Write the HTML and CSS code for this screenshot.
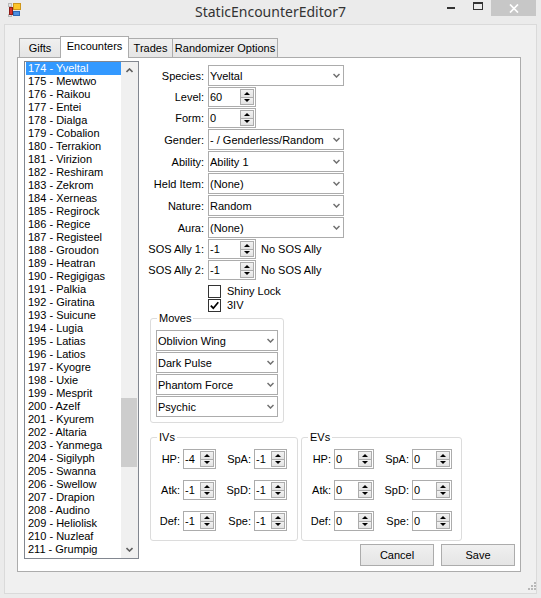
FILE: index.html
```html
<!DOCTYPE html>
<html lang="en">
<head>
    <meta charset="UTF-8">
    <meta name="viewport" content="width=device-width, initial-scale=1.0">
    <title>StaticEncounterEditor7</title>
    <link rel="stylesheet" href="styles.css">
</head>
<body>
    <div class="window">
        <!-- Title bar -->
        <div class="title-bar">
            <div class="title-left">
                <svg class="app-icon" width="14" height="14" viewBox="0 0 14 14">
                    <rect x="0.5" y="0.5" width="3" height="3" fill="#e2e2e2" stroke="#b9b9b9"/>
                    <rect x="0.5" y="11.5" width="3" height="2" fill="#e2e2e2" stroke="#b9b9b9"/>
                    <rect x="1.5" y="4.5" width="3" height="7" fill="#d9342c" stroke="#8e1d18"/>
                    <rect x="5.5" y="0.5" width="7" height="6" fill="#fcc52a" stroke="#cf961b"/>
                    <rect x="5.5" y="8.5" width="6" height="4" fill="#4d8fe0" stroke="#2d68b5"/>
                </svg>
            </div>
            <div class="title-text">StaticEncounterEditor7</div>
            <div class="title-right">
                <span class="caption-min"></span>
                <span class="caption-max"></span>
                <span class="caption-close">
                    <svg width="10" height="9" viewBox="0 0 10 9">
                        <path d="M1 0.5 L9 8.5 M9 0.5 L1 8.5" stroke="#fff" stroke-width="1.7" fill="none"/>
                    </svg>
                </span>
            </div>
        </div>

        <!-- Client area -->
        <div class="client">
            <div class="tab-strip">
                <div class="tab tab-gifts">Gifts</div>
                <div class="tab tab-encounters selected">Encounters</div>
                <div class="tab tab-trades">Trades</div>
                <div class="tab tab-random">Randomizer Options</div>
            </div>

            <div class="tab-page">
                <!-- Encounter list -->
                <div class="list-box">
                    <div class="list-items">
                        <div class="list-item selected">174 - Yveltal</div>
                        <div class="list-item">175 - Mewtwo</div>
                        <div class="list-item">176 - Raikou</div>
                        <div class="list-item">177 - Entei</div>
                        <div class="list-item">178 - Dialga</div>
                        <div class="list-item">179 - Cobalion</div>
                        <div class="list-item">180 - Terrakion</div>
                        <div class="list-item">181 - Virizion</div>
                        <div class="list-item">182 - Reshiram</div>
                        <div class="list-item">183 - Zekrom</div>
                        <div class="list-item">184 - Xerneas</div>
                        <div class="list-item">185 - Regirock</div>
                        <div class="list-item">186 - Regice</div>
                        <div class="list-item">187 - Registeel</div>
                        <div class="list-item">188 - Groudon</div>
                        <div class="list-item">189 - Heatran</div>
                        <div class="list-item">190 - Regigigas</div>
                        <div class="list-item">191 - Palkia</div>
                        <div class="list-item">192 - Giratina</div>
                        <div class="list-item">193 - Suicune</div>
                        <div class="list-item">194 - Lugia</div>
                        <div class="list-item">195 - Latias</div>
                        <div class="list-item">196 - Latios</div>
                        <div class="list-item">197 - Kyogre</div>
                        <div class="list-item">198 - Uxie</div>
                        <div class="list-item">199 - Mesprit</div>
                        <div class="list-item">200 - Azelf</div>
                        <div class="list-item">201 - Kyurem</div>
                        <div class="list-item">202 - Altaria</div>
                        <div class="list-item">203 - Yanmega</div>
                        <div class="list-item">204 - Sigilyph</div>
                        <div class="list-item">205 - Swanna</div>
                        <div class="list-item">206 - Swellow</div>
                        <div class="list-item">207 - Drapion</div>
                        <div class="list-item">208 - Audino</div>
                        <div class="list-item">209 - Heliolisk</div>
                        <div class="list-item">210 - Nuzleaf</div>
                        <div class="list-item">211 - Grumpig</div>
                    </div>
                    <div class="v-scroll">
                        <div class="scroll-arrow">
                            <svg width="7" height="5" viewBox="0 0 7 5"><path d="M0.5 4 L3.5 1 L6.5 4" stroke="#606060" stroke-width="1.6" fill="none"/></svg>
                        </div>
                        <div class="scroll-track">
                            <div class="scroll-thumb"></div>
                        </div>
                        <div class="scroll-arrow">
                            <svg width="7" height="5" viewBox="0 0 7 5"><path d="M0.5 1 L3.5 4 L6.5 1" stroke="#606060" stroke-width="1.6" fill="none"/></svg>
                        </div>
                    </div>
                </div>

                <!-- Encounter details -->
                <div class="editor">
                    <div class="field-grid">
                        <span class="field-label">Species:</span>
                        <div class="combo combo-wide"><span class="combo-text">Yveltal</span><svg class="chevron" width="7" height="5" viewBox="0 0 7 5"><path d="M0.5 1 L3.5 4 L6.5 1" stroke="#707070" stroke-width="1.5" fill="none"/></svg></div>

                        <span class="field-label">Level:</span>
                        <div class="spinner spinner-field"><span class="spin-value">60</span><span class="spin-buttons"><span class="spin-up"><i></i></span><span class="spin-down"><i></i></span></span></div>

                        <span class="field-label">Form:</span>
                        <div class="spinner spinner-field"><span class="spin-value">0</span><span class="spin-buttons"><span class="spin-up"><i></i></span><span class="spin-down"><i></i></span></span></div>

                        <span class="field-label">Gender:</span>
                        <div class="combo combo-wide"><span class="combo-text">- / Genderless/Random</span><svg class="chevron" width="7" height="5" viewBox="0 0 7 5"><path d="M0.5 1 L3.5 4 L6.5 1" stroke="#707070" stroke-width="1.5" fill="none"/></svg></div>

                        <span class="field-label">Ability:</span>
                        <div class="combo combo-wide"><span class="combo-text">Ability 1</span><svg class="chevron" width="7" height="5" viewBox="0 0 7 5"><path d="M0.5 1 L3.5 4 L6.5 1" stroke="#707070" stroke-width="1.5" fill="none"/></svg></div>

                        <span class="field-label">Held Item:</span>
                        <div class="combo combo-wide"><span class="combo-text">(None)</span><svg class="chevron" width="7" height="5" viewBox="0 0 7 5"><path d="M0.5 1 L3.5 4 L6.5 1" stroke="#707070" stroke-width="1.5" fill="none"/></svg></div>

                        <span class="field-label">Nature:</span>
                        <div class="combo combo-wide"><span class="combo-text">Random</span><svg class="chevron" width="7" height="5" viewBox="0 0 7 5"><path d="M0.5 1 L3.5 4 L6.5 1" stroke="#707070" stroke-width="1.5" fill="none"/></svg></div>

                        <span class="field-label">Aura:</span>
                        <div class="combo combo-wide"><span class="combo-text">(None)</span><svg class="chevron" width="7" height="5" viewBox="0 0 7 5"><path d="M0.5 1 L3.5 4 L6.5 1" stroke="#707070" stroke-width="1.5" fill="none"/></svg></div>

                        <span class="field-label">SOS Ally 1:</span>
                        <div class="sos-row">
                            <div class="spinner spinner-field"><span class="spin-value">-1</span><span class="spin-buttons"><span class="spin-up"><i></i></span><span class="spin-down"><i></i></span></span></div>
                            <span>No SOS Ally</span>
                        </div>

                        <span class="field-label">SOS Ally 2:</span>
                        <div class="sos-row">
                            <div class="spinner spinner-field"><span class="spin-value">-1</span><span class="spin-buttons"><span class="spin-up"><i></i></span><span class="spin-down"><i></i></span></span></div>
                            <span>No SOS Ally</span>
                        </div>
                    </div>

                    <div class="check-list">
                        <div class="check-row">
                            <span class="check-box"></span>
                            <span class="check-text">Shiny Lock</span>
                        </div>
                        <div class="check-row">
                            <span class="check-box">
                                <svg width="11" height="11" viewBox="0 0 11 11"><path d="M1.8 5.6 L4.3 8.2 L9.3 2.2" stroke="#000" stroke-width="1.7" fill="none"/></svg>
                            </span>
                            <span class="check-text">3IV</span>
                        </div>
                    </div>

                    <!-- Moves -->
                    <fieldset class="group-box moves-box">
                        <legend>Moves</legend>
                        <div class="move-list">
                            <div class="combo combo-move"><span class="combo-text">Oblivion Wing</span><svg class="chevron" width="7" height="5" viewBox="0 0 7 5"><path d="M0.5 1 L3.5 4 L6.5 1" stroke="#707070" stroke-width="1.5" fill="none"/></svg></div>
                            <div class="combo combo-move"><span class="combo-text">Dark Pulse</span><svg class="chevron" width="7" height="5" viewBox="0 0 7 5"><path d="M0.5 1 L3.5 4 L6.5 1" stroke="#707070" stroke-width="1.5" fill="none"/></svg></div>
                            <div class="combo combo-move"><span class="combo-text">Phantom Force</span><svg class="chevron" width="7" height="5" viewBox="0 0 7 5"><path d="M0.5 1 L3.5 4 L6.5 1" stroke="#707070" stroke-width="1.5" fill="none"/></svg></div>
                            <div class="combo combo-move"><span class="combo-text">Psychic</span><svg class="chevron" width="7" height="5" viewBox="0 0 7 5"><path d="M0.5 1 L3.5 4 L6.5 1" stroke="#707070" stroke-width="1.5" fill="none"/></svg></div>
                        </div>
                    </fieldset>

                    <!-- IVs / EVs -->
                    <div class="stats-row">
                        <fieldset class="group-box">
                            <legend>IVs</legend>
                            <div class="stat-grid iv-grid">
                                <span class="stat-label">HP:</span>
                                <div class="spinner"><span class="spin-value">-4</span><span class="spin-buttons"><span class="spin-up"><i></i></span><span class="spin-down"><i></i></span></span></div>
                                <span class="stat-label">SpA:</span>
                                <div class="spinner"><span class="spin-value">-1</span><span class="spin-buttons"><span class="spin-up"><i></i></span><span class="spin-down"><i></i></span></span></div>

                                <span class="stat-label">Atk:</span>
                                <div class="spinner"><span class="spin-value">-1</span><span class="spin-buttons"><span class="spin-up"><i></i></span><span class="spin-down"><i></i></span></span></div>
                                <span class="stat-label">SpD:</span>
                                <div class="spinner"><span class="spin-value">-1</span><span class="spin-buttons"><span class="spin-up"><i></i></span><span class="spin-down"><i></i></span></span></div>

                                <span class="stat-label">Def:</span>
                                <div class="spinner"><span class="spin-value">-1</span><span class="spin-buttons"><span class="spin-up"><i></i></span><span class="spin-down"><i></i></span></span></div>
                                <span class="stat-label">Spe:</span>
                                <div class="spinner"><span class="spin-value">-1</span><span class="spin-buttons"><span class="spin-up"><i></i></span><span class="spin-down"><i></i></span></span></div>
                            </div>
                        </fieldset>

                        <fieldset class="group-box">
                            <legend>EVs</legend>
                            <div class="stat-grid ev-grid">
                                <span class="stat-label">HP:</span>
                                <div class="spinner"><span class="spin-value">0</span><span class="spin-buttons"><span class="spin-up"><i></i></span><span class="spin-down"><i></i></span></span></div>
                                <span class="stat-label">SpA:</span>
                                <div class="spinner"><span class="spin-value">0</span><span class="spin-buttons"><span class="spin-up"><i></i></span><span class="spin-down"><i></i></span></span></div>

                                <span class="stat-label">Atk:</span>
                                <div class="spinner"><span class="spin-value">0</span><span class="spin-buttons"><span class="spin-up"><i></i></span><span class="spin-down"><i></i></span></span></div>
                                <span class="stat-label">SpD:</span>
                                <div class="spinner"><span class="spin-value">0</span><span class="spin-buttons"><span class="spin-up"><i></i></span><span class="spin-down"><i></i></span></span></div>

                                <span class="stat-label">Def:</span>
                                <div class="spinner"><span class="spin-value">0</span><span class="spin-buttons"><span class="spin-up"><i></i></span><span class="spin-down"><i></i></span></span></div>
                                <span class="stat-label">Spe:</span>
                                <div class="spinner"><span class="spin-value">0</span><span class="spin-buttons"><span class="spin-up"><i></i></span><span class="spin-down"><i></i></span></span></div>
                            </div>
                        </fieldset>
                    </div>

                    <div class="actions">
                        <button class="win-button">Cancel</button>
                        <button class="win-button">Save</button>
                    </div>
                </div>
            </div>

            <!-- Resize grip -->
            <svg class="size-grip" width="10" height="10" viewBox="0 0 10 10">
                <rect x="8" y="0" width="2" height="2" fill="#b8b8b8"/>
                <rect x="5" y="3" width="2" height="2" fill="#b8b8b8"/>
                <rect x="8" y="3" width="2" height="2" fill="#b8b8b8"/>
                <rect x="2" y="6" width="2" height="2" fill="#b8b8b8"/>
                <rect x="5" y="6" width="2" height="2" fill="#b8b8b8"/>
                <rect x="8" y="6" width="2" height="2" fill="#b8b8b8"/>
            </svg>
        </div>
    </div>
</body>
</html>
```

FILE: styles.css
```css
/* Page */
body {
    margin: 0;
    font-family: "Liberation Sans", Arial, sans-serif;
    font-size: 11px;
    color: #000;
    background: #ebebeb;
}

/* Window frame */
.window {
    width: 541px;
    height: 598px;
    display: flex;
    flex-direction: column;
    overflow: hidden;
}

/* Title bar */
.title-bar {
    height: 24px;
    flex-shrink: 0;
    display: grid;
    grid-template-columns: 1fr auto 1fr;
}

.title-left {
    display: flex;
    align-items: flex-start;
    padding: 3px 0 0 8px;
}

.title-text {
    font-family: "Noto Sans", sans-serif;
    font-size: 14px;
    line-height: 24px;
    color: #333;
}

.title-right {
    display: flex;
    justify-content: flex-end;
    align-items: flex-start;
}

.caption-min {
    width: 8px;
    height: 2px;
    background: #333;
    margin: 7px 18px 0 0;
}

.caption-max {
    width: 10px;
    height: 8px;
    box-sizing: border-box;
    border: 1px solid #333;
    border-top-width: 2px;
    margin: 2px 8px 0 0;
}

.caption-close {
    width: 45px;
    height: 16px;
    margin-right: 5px;
    background: #c7c7c7;
    display: flex;
    align-items: center;
    justify-content: center;
}

/* Client area */
.client {
    flex: 1;
    margin: 0 4px 4px 4px;
    border: 1px solid #dadada;
    background: #f0f0f0;
    display: flex;
    flex-direction: column;
    padding: 11px 0 0 12px;
}

/* Tabs */
.tab-strip {
    display: flex;
    align-items: flex-end;
    height: 22px;
    margin: 0 0 -1px 2px;
    position: relative;
    z-index: 1;
}

.tab {
    height: 19px;
    margin: 0 0 1px -1px;
    box-sizing: border-box;
    border: 1px solid #acacac;
    border-bottom: none;
    background: linear-gradient(#f0f0f0, #e5e5e5);
    display: flex;
    align-items: center;
    justify-content: center;
    white-space: nowrap;
}

.tab-gifts { width: 42px; margin-left: 0; }
.tab-encounters { width: 69px; }
.tab-trades { width: 45px; }
.tab-random { width: 106px; }

.tab.selected {
    height: 22px;
    margin-bottom: 0;
    padding-bottom: 3px;
    background: #fff;
    position: relative;
}

/* Tab page */
.tab-page {
    width: 504px;
    height: 515px;
    box-sizing: border-box;
    border: 1px solid #acacac;
    background: #fff;
    display: flex;
    align-items: flex-start;
    padding: 3px 0 0 6px;
}

/* List box */
.list-box {
    width: 115px;
    height: 498px;
    box-sizing: border-box;
    border: 1px solid #828790;
    padding-left: 1px;
    display: flex;
    flex-shrink: 0;
}

.list-items {
    flex: 1;
    overflow: hidden;
}

.list-item {
    height: 13px;
    line-height: 13px;
    padding-left: 2px;
    white-space: nowrap;
}

.list-item.selected {
    background: #3399ff;
    color: #fff;
}

.v-scroll {
    width: 17px;
    display: flex;
    flex-direction: column;
    background: #f0f0f0;
}

.scroll-arrow {
    height: 17px;
    display: flex;
    align-items: center;
    justify-content: center;
}

.scroll-track {
    flex: 1;
}

.scroll-thumb {
    height: 69px;
    margin: 319px 1px 0 0;
    background: #cdcdcd;
}

/* Editor column */
.editor {
    flex: 1;
    margin: 4px 0 0 11px;
    display: flex;
    flex-direction: column;
    align-items: flex-start;
}

.field-grid {
    display: grid;
    grid-template-columns: 54px auto;
    column-gap: 4px;
    row-gap: 1px;
    align-items: center;
}

.field-label {
    display: flex;
    justify-content: flex-end;
    white-space: nowrap;
}

/* Combo boxes */
.combo {
    height: 21px;
    box-sizing: border-box;
    border: 1px solid #acacac;
    background: #fff;
    padding-left: 1px;
    display: flex;
    align-items: center;
}

.combo-text {
    flex: 1;
    white-space: nowrap;
    overflow: hidden;
}

.chevron {
    margin: 0 3px 0 2px;
}

.combo-wide { width: 136px; }
.combo-move { width: 122px; }

/* Numeric up-down */
.spinner {
    height: 20px;
    box-sizing: border-box;
    border: 1px solid #acacac;
    background: #fff;
    padding-left: 1px;
    display: flex;
}

.spinner-field { width: 48px; }

.spin-value {
    flex: 1;
    line-height: 18px;
}

.spin-buttons {
    width: 14px;
    margin: 1px 1px 1px 0;
    display: flex;
    flex-direction: column;
}

.spin-up,
.spin-down {
    flex: 1;
    box-sizing: border-box;
    border: 1px solid #acacac;
    background: linear-gradient(#f2f2f2, #e3e3e3);
    display: flex;
    align-items: center;
    justify-content: center;
}

.spin-down {
    border-top: none;
}

.spin-up i {
    border-left: 3px solid transparent;
    border-right: 3px solid transparent;
    border-bottom: 3px solid #000;
}

.spin-down i {
    border-left: 3px solid transparent;
    border-right: 3px solid transparent;
    border-top: 3px solid #000;
}

.sos-row {
    display: flex;
    align-items: center;
    gap: 5px;
}

/* Check boxes */
.check-list {
    margin: 4px 0 0 58px;
}

.check-row {
    height: 14px;
    display: flex;
    gap: 6px;
}

.check-box {
    width: 13px;
    height: 13px;
    box-sizing: border-box;
    border: 1px solid #333;
    background: #fff;
    align-self: flex-end;
    display: flex;
}

.check-text {
    align-self: center;
}

/* Group boxes */
.group-box {
    margin: 0;
    padding: 0;
    min-inline-size: 0;
    box-sizing: border-box;
    border: 1px solid #dcdcdc;
    border-radius: 3px;
}

.group-box legend {
    margin-left: 6px;
    padding: 0 2px;
    line-height: 13px;
}

.moves-box {
    width: 134px;
}

.move-list {
    padding: 5px;
    display: flex;
    flex-direction: column;
    gap: 1px;
}

.stats-row {
    display: flex;
    gap: 3px;
    margin-top: 8px;
}

.stat-grid {
    display: grid;
    grid-auto-rows: 20px;
    row-gap: 11px;
    align-items: center;
    padding: 5px 10px 9px 0;
}

.iv-grid {
    grid-template-columns: 32px 33px 38px 33px;
}

.ev-grid {
    grid-template-columns: 32px 40px 38px 40px;
    padding-right: 9px;
}

.stat-label {
    display: flex;
    justify-content: flex-end;
    padding-right: 3px;
}

/* Buttons */
.actions {
    align-self: stretch;
    display: flex;
    justify-content: flex-end;
    gap: 7px;
    margin-top: 3px;
    padding-right: 5px;
}

.win-button {
    width: 74px;
    height: 22px;
    box-sizing: border-box;
    border: 1px solid #acacac;
    background: linear-gradient(#f0f0f0, #e5e5e5);
    font: inherit;
    color: #000;
    padding: 0;
}

.size-grip {
    margin-top: auto;
    margin-bottom: 1px;
    align-self: flex-end;
}
```
